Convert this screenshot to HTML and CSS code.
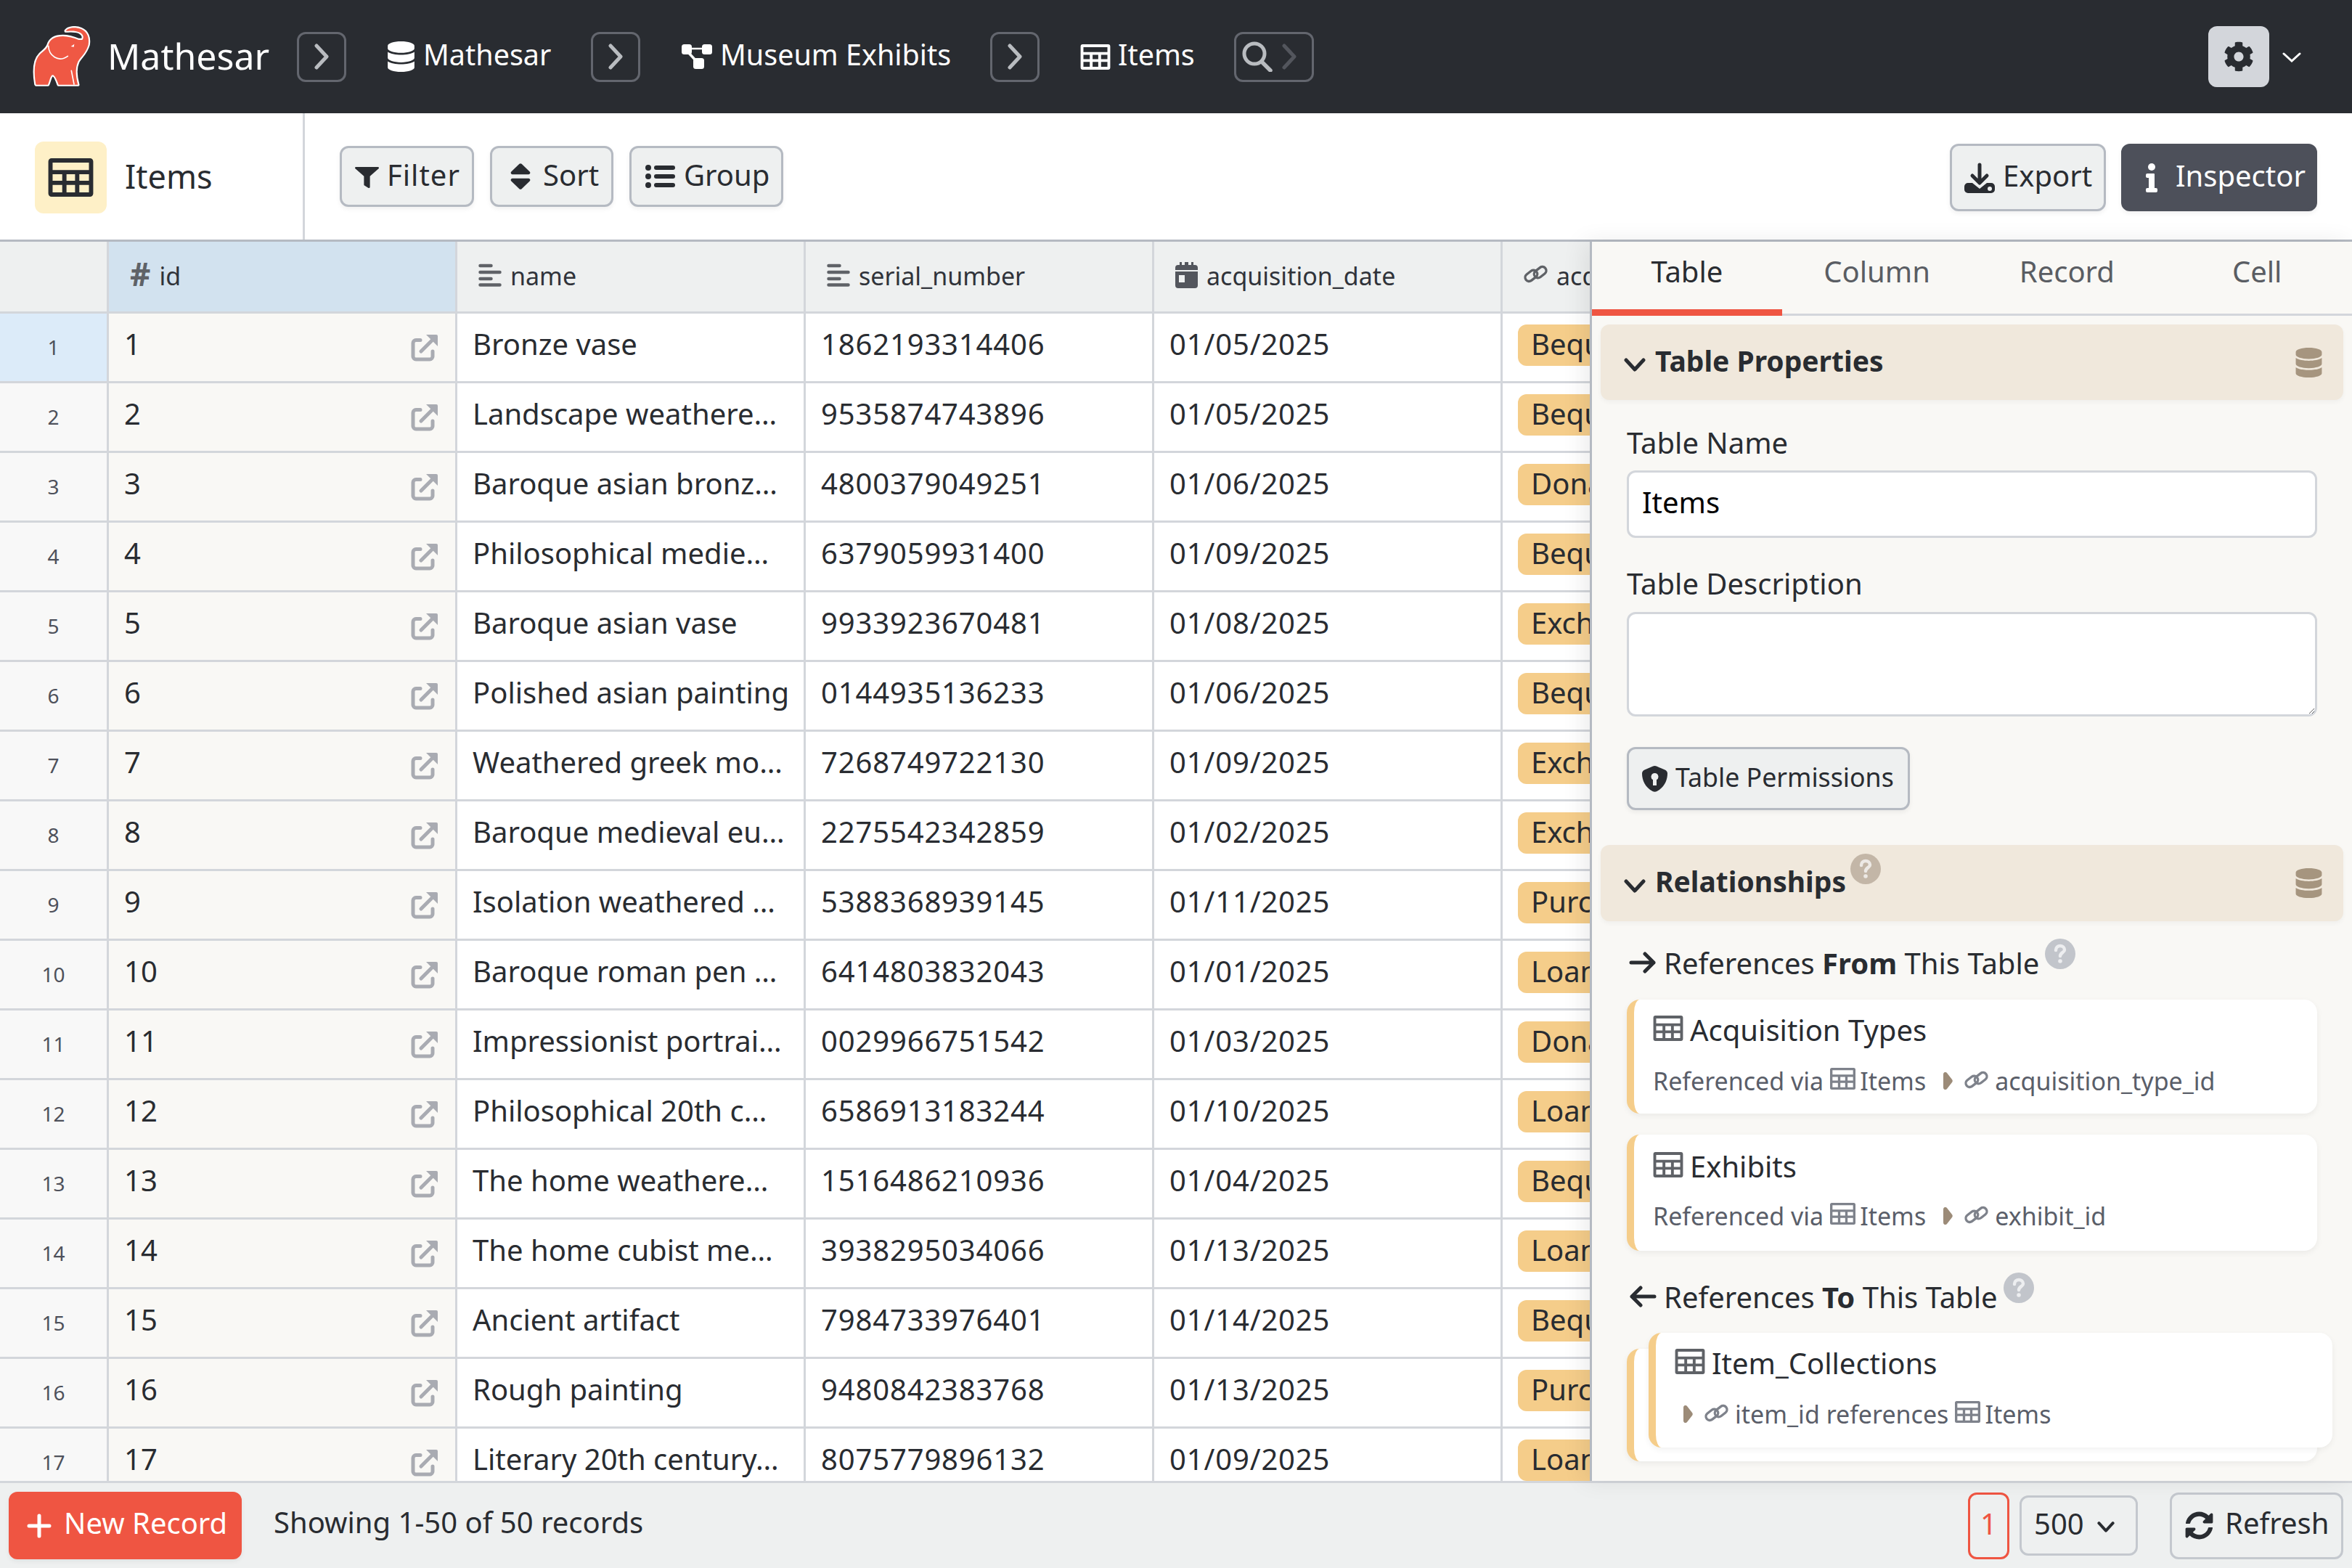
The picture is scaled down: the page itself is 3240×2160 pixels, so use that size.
FILE: index.html
```html
<!DOCTYPE html>
<html lang="en">
<head>
<meta charset="utf-8">
<title>Items | Mathesar</title>
<link rel="stylesheet" href="styles.css">
</head>
<body>
<svg class="defs" aria-hidden="true">
  <symbol id="tbl" viewBox="0 0 42 36"><path fill="currentColor" fill-rule="evenodd" d="M3 0h36a3 3 0 0 1 3 3v30a3 3 0 0 1-3 3H3a3 3 0 0 1-3-3V3a3 3 0 0 1 3-3zM4 4v7h34V4zM4 15v6h9v-6zm13 0v6h8v-6zm12 0v6h9v-6zM4 25v7h9v-7zm13 0v7h8v-7zm12 0v7h9v-7z"/></symbol>
  <symbol id="db" viewBox="0 0 448 512"><path fill="currentColor" d="M448 73.143v45.714C448 159.143 347.667 192 224 192S0 159.143 0 118.857V73.143C0 32.857 100.333 0 224 0s224 32.857 224 73.143zM448 176v102.857C448 319.143 347.667 352 224 352S0 319.143 0 278.857V176c48.125 33.143 136.208 48.572 224 48.572S399.874 209.143 448 176zm0 160v102.857C448 479.143 347.667 512 224 512S0 479.143 0 438.857V336c48.125 33.143 136.208 48.572 224 48.572S399.874 369.143 448 336z"/></symbol>
  <symbol id="chev" viewBox="0 0 20 36"><path fill="none" stroke="currentColor" stroke-width="5" stroke-linecap="round" stroke-linejoin="round" d="M3 3l14 15L3 33"/></symbol>
  <symbol id="down" viewBox="0 0 30 20"><path fill="none" stroke="currentColor" stroke-width="5" stroke-linecap="round" stroke-linejoin="round" d="M3 4l12 13L27 4"/></symbol>
  <symbol id="ext" viewBox="0 0 37 37"><path fill="none" stroke="currentColor" stroke-width="5" stroke-linecap="round" d="M13 7.500H7a4 4 0 0 0-4 4V30a4 4 0 0 0 4 4h19a4 4 0 0 0 4-4v-7M14 23L30 7"/><path fill="currentColor" d="M21 0h14a2 2 0 0 1 2 2v14z"/></symbol>
  <symbol id="text" viewBox="0 0 32 32"><g fill="none" stroke="currentColor" stroke-width="4.500" stroke-linecap="round"><path d="M2.500 3h15M2.500 12h27M2.500 21h15M2.500 29.500h27"/></g></symbol>
  <symbol id="link" viewBox="0 0 34 28"><g fill="none" stroke="currentColor" stroke-width="3.500" transform="rotate(-38 17 14)"><rect x="1" y="6.500" width="19" height="11" rx="5.500"/><rect x="14" y="10.500" width="19" height="11" rx="5.500"/></g></symbol>
  <symbol id="help" viewBox="0 0 42 42"><circle cx="21" cy="21" r="21" fill="currentColor"/><path fill="none" stroke="#fff" stroke-opacity=".7" stroke-width="4.500" stroke-linecap="round" d="M15 16c0-4 3-6 6-6s6 2 6 5.500-6 4-6 8.500"/><circle cx="21" cy="31" r="2.800" fill="#fff" fill-opacity=".7"/></symbol>
  <symbol id="tri" viewBox="0 0 13 24"><path fill="currentColor" d="M0 3c0-3 3-4 5-2l7 9c1 1 1 3 0 4l-7 9c-2 2-5 1-5-2z"/></symbol>
</svg>

<header class="topbar">
  <svg class="logo" viewBox="36 48 249 252"><path fill="#ef5844" stroke="#fff" stroke-width="13" stroke-linejoin="round" paint-order="stroke" d="M58 288C50 240 50 190 75 165 90 150 105 142 110 125 118 100 140 90 170 90 190 90 215 97 235 105L250 105C258 95 255 82 240 74 220 64 195 68 182 68 190 54 220 50 245 60 270 70 280 95 275 125 265 160 245 172 232 195 218 225 225 265 232 290L152 290C145 270 136 250 128 250 118 250 115 275 108 290L60 290Z"/><path fill="none" stroke="#fff" stroke-width="5" stroke-linecap="round" d="M110 130C112 170 150 200 190 172M205 232L216 288"/><path fill="#fff" d="M203 132l14-10-2 12z"/></svg>
  <span class="brand">Mathesar</span>
  <span class="crumb-btn first"><svg class="crumb-chev"><use href="#chev"/></svg></span>
  <svg class="ic-db"><use href="#db"/></svg>
  <span class="crumb">Mathesar</span>
  <span class="crumb-btn"><svg class="crumb-chev"><use href="#chev"/></svg></span>
  <svg class="ic-schema" viewBox="0 0 42 34"><g fill="#fff"><rect width="14" height="14" rx="3.500"/><rect x="28" width="14" height="14" rx="3.500"/><rect x="16" y="19" width="15" height="15" rx="3.500"/></g><path stroke="#fff" stroke-width="2.500" d="M10 6h22"/><path stroke="#fff" stroke-width="3.500" d="M8 10l13 14"/></svg>
  <span class="crumb exhibits">Museum Exhibits</span>
  <span class="crumb-btn"><svg class="crumb-chev"><use href="#chev"/></svg></span>
  <svg class="ic-crumb-table"><use href="#tbl"/></svg>
  <span class="crumb items">Items</span>
  <span class="crumb-btn search">
    <svg class="ic-search" viewBox="0 0 43 42"><circle cx="17" cy="17" r="14" fill="none" stroke="currentColor" stroke-width="5"/><path stroke="currentColor" stroke-width="5.500" stroke-linecap="round" d="M27 28l12 12"/></svg>
    <svg class="crumb-chev dim"><use href="#chev"/></svg>
  </span>
  <span class="gear"><svg class="ic-gear" viewBox="0 0 512 512"><path fill="currentColor" d="M487.400 315.700l-42.600-24.600c4.300-23.200 4.300-47 0-70.200l42.600-24.600c4.900-2.800 7.100-8.600 5.500-14-11.100-35.600-30-67.800-54.700-94.600-3.800-4.100-10-5.100-14.800-2.300L380.800 110c-17.900-15.400-38.500-27.300-60.800-35.100V25.800c0-5.600-3.900-10.500-9.400-11.700-36.700-8.200-74.300-7.800-109.200 0-5.500 1.200-9.400 6.100-9.400 11.700V75c-22.200 7.900-42.800 19.800-60.800 35.100L88.700 85.500c-4.900-2.800-11-1.900-14.800 2.300-24.700 26.700-43.600 58.900-54.700 94.600-1.700 5.400.6 11.200 5.500 14L67.300 221c-4.300 23.200-4.300 47 0 70.200l-42.600 24.600c-4.900 2.800-7.100 8.600-5.500 14 11.100 35.600 30 67.800 54.700 94.600 3.800 4.100 10 5.100 14.800 2.300l42.600-24.600c17.900 15.400 38.500 27.300 60.800 35.100v49.200c0 5.600 3.900 10.500 9.400 11.700 36.700 8.200 74.300 7.800 109.200 0 5.500-1.200 9.400-6.100 9.400-11.700v-49.200c22.200-7.900 42.800-19.800 60.800-35.100l42.600 24.600c4.900 2.800 11 1.900 14.800-2.300 24.700-26.700 43.600-58.900 54.700-94.600 1.500-5.500-.7-11.300-5.600-14.100zM256 336c-44.100 0-80-35.900-80-80s35.900-80 80-80 80 35.900 80 80-35.900 80-80 80z"/></svg></span>
  <svg class="ic-gear-down" viewBox="0 0 26 14"><path fill="none" stroke="#fff" stroke-width="3" stroke-linecap="round" d="M2 2l11 10L24 2"/></svg>
</header>

<section class="toolbar">
  <div class="title-panel">
    <span class="tile"><svg class="ic-tile"><use href="#tbl"/></svg></span>
    <span class="title">Items</span>
  </div>
  <div class="tools">
    <button class="btn filter"><svg class="ic-filter" viewBox="0 0 512 512" preserveAspectRatio="none"><path fill="currentColor" d="M487.976 0H24.028C2.710 0-8.047 25.866 7.058 40.971L192 225.941V432c0 7.831 3.821 15.170 10.237 19.662l80 55.980C298.020 518.690 320 507.493 320 487.980V225.941l184.947-184.970C520.021 25.896 509.338 0 487.976 0z"/></svg>Filter</button>
    <button class="btn sort"><svg class="ic-sort" viewBox="10 55 300 402" preserveAspectRatio="none"><path fill="currentColor" d="M41 288h238c21.400 0 32.100 25.900 17 41L177 448c-9.400 9.400-24.600 9.400-33.900 0L24 329c-15.100-15.100-4.400-41 17-41zm255-105L177 64c-9.400-9.400-24.600-9.400-33.900 0L24 183c-15.100 15.100-4.400 41 17 41h238c21.400 0 32.100-25.900 17-41z"/></svg>Sort</button>
    <button class="btn group"><svg class="ic-list" viewBox="0 0 41 34"><g fill="currentColor"><circle cx="4" cy="5" r="4"/><circle cx="4" cy="17" r="4"/><circle cx="4" cy="29" r="4"/><rect x="12" y="2" width="29" height="6" rx="3"/><rect x="12" y="14" width="29" height="6" rx="3"/><rect x="12" y="26" width="29" height="6" rx="3"/></g></svg>Group</button>
  </div>
  <div class="actions">
    <button class="btn export"><svg class="ic-export" viewBox="0 0 42 42"><path fill="none" stroke="currentColor" stroke-width="5" stroke-linecap="round" stroke-linejoin="round" d="M21 3v24M11 18l10 10 10-10"/><path fill="currentColor" fill-rule="evenodd" d="M5 28h6l10 8 10-8h6a5 5 0 0 1 5 5v4a5 5 0 0 1-5 5H5a5 5 0 0 1-5-5v-4a5 5 0 0 1 5-5zm30 5a3 3 0 1 0 0 6 3 3 0 0 0 0-6z"/></svg>Export</button>
    <button class="btn inspector-btn"><svg class="ic-info" viewBox="0 0 16 40"><circle cx="8" cy="5" r="5" fill="#fff"/><path fill="#fff" d="M2 14h9a1 1 0 0 1 1 1v19h2a2 2 0 0 1 2 2v2a2 2 0 0 1-2 2H2a2 2 0 0 1-2-2v-2a2 2 0 0 1 2-2h2V20H2a2 2 0 0 1-2-2v-2a2 2 0 0 1 2-2z"/></svg>Inspector</button>
  </div>
</section>

<main class="main">
  <section class="table">
    <div class="row head">
      <div class="hcell corner"></div>
      <div class="hcell selected"><span class="hash">#</span>id</div>
      <div class="hcell"><svg class="ic-text"><use href="#text"/></svg>name</div>
      <div class="hcell"><svg class="ic-text"><use href="#text"/></svg>serial_number</div>
      <div class="hcell"><svg class="ic-date" viewBox="0 0 31 36"><path fill="currentColor" fill-rule="evenodd" d="M6 0h3v4h4V0h5v4h4V0h3v4h2a4 4 0 0 1 4 4v3H0V8a4 4 0 0 1 4-4h2zM0 13h31v19a4 4 0 0 1-4 4H4a4 4 0 0 1-4-4zm5 5v10h8V18z"/></svg>acquisition_date</div>
      <div class="hcell"><svg class="ic-link"><use href="#link"/></svg>acquisition_type_id</div>
    </div>
    <div class="row"><div class="num current">1</div><div class="idc">1<svg class="ic-ext"><use href="#ext"/></svg></div><div class="cell">Bronze vase</div><div class="cell">1862193314406</div><div class="cell">01/05/2025</div><div class="cell"><span class="badge">Bequest</span></div></div>
    <div class="row"><div class="num">2</div><div class="idc">2<svg class="ic-ext"><use href="#ext"/></svg></div><div class="cell">Landscape weathere…</div><div class="cell">9535874743896</div><div class="cell">01/05/2025</div><div class="cell"><span class="badge">Bequest</span></div></div>
    <div class="row"><div class="num">3</div><div class="idc">3<svg class="ic-ext"><use href="#ext"/></svg></div><div class="cell">Baroque asian bronz…</div><div class="cell">4800379049251</div><div class="cell">01/06/2025</div><div class="cell"><span class="badge">Donation</span></div></div>
    <div class="row"><div class="num">4</div><div class="idc">4<svg class="ic-ext"><use href="#ext"/></svg></div><div class="cell">Philosophical medie…</div><div class="cell">6379059931400</div><div class="cell">01/09/2025</div><div class="cell"><span class="badge">Bequest</span></div></div>
    <div class="row"><div class="num">5</div><div class="idc">5<svg class="ic-ext"><use href="#ext"/></svg></div><div class="cell">Baroque asian vase</div><div class="cell">9933923670481</div><div class="cell">01/08/2025</div><div class="cell"><span class="badge">Exchange</span></div></div>
    <div class="row"><div class="num">6</div><div class="idc">6<svg class="ic-ext"><use href="#ext"/></svg></div><div class="cell">Polished asian painting</div><div class="cell">0144935136233</div><div class="cell">01/06/2025</div><div class="cell"><span class="badge">Bequest</span></div></div>
    <div class="row"><div class="num">7</div><div class="idc">7<svg class="ic-ext"><use href="#ext"/></svg></div><div class="cell">Weathered greek mo…</div><div class="cell">7268749722130</div><div class="cell">01/09/2025</div><div class="cell"><span class="badge">Exchange</span></div></div>
    <div class="row"><div class="num">8</div><div class="idc">8<svg class="ic-ext"><use href="#ext"/></svg></div><div class="cell">Baroque medieval eu…</div><div class="cell">2275542342859</div><div class="cell">01/02/2025</div><div class="cell"><span class="badge">Exchange</span></div></div>
    <div class="row"><div class="num">9</div><div class="idc">9<svg class="ic-ext"><use href="#ext"/></svg></div><div class="cell">Isolation weathered …</div><div class="cell">5388368939145</div><div class="cell">01/11/2025</div><div class="cell"><span class="badge">Purchase</span></div></div>
    <div class="row"><div class="num">10</div><div class="idc">10<svg class="ic-ext"><use href="#ext"/></svg></div><div class="cell">Baroque roman pen …</div><div class="cell">6414803832043</div><div class="cell">01/01/2025</div><div class="cell"><span class="badge">Loan</span></div></div>
    <div class="row"><div class="num">11</div><div class="idc">11<svg class="ic-ext"><use href="#ext"/></svg></div><div class="cell">Impressionist portrai…</div><div class="cell">0029966751542</div><div class="cell">01/03/2025</div><div class="cell"><span class="badge">Donation</span></div></div>
    <div class="row"><div class="num">12</div><div class="idc">12<svg class="ic-ext"><use href="#ext"/></svg></div><div class="cell">Philosophical 20th c…</div><div class="cell">6586913183244</div><div class="cell">01/10/2025</div><div class="cell"><span class="badge">Loan</span></div></div>
    <div class="row"><div class="num">13</div><div class="idc">13<svg class="ic-ext"><use href="#ext"/></svg></div><div class="cell">The home weathere…</div><div class="cell">1516486210936</div><div class="cell">01/04/2025</div><div class="cell"><span class="badge">Bequest</span></div></div>
    <div class="row"><div class="num">14</div><div class="idc">14<svg class="ic-ext"><use href="#ext"/></svg></div><div class="cell">The home cubist me…</div><div class="cell">3938295034066</div><div class="cell">01/13/2025</div><div class="cell"><span class="badge">Loan</span></div></div>
    <div class="row"><div class="num">15</div><div class="idc">15<svg class="ic-ext"><use href="#ext"/></svg></div><div class="cell">Ancient artifact</div><div class="cell">7984733976401</div><div class="cell">01/14/2025</div><div class="cell"><span class="badge">Bequest</span></div></div>
    <div class="row"><div class="num">16</div><div class="idc">16<svg class="ic-ext"><use href="#ext"/></svg></div><div class="cell">Rough painting</div><div class="cell">9480842383768</div><div class="cell">01/13/2025</div><div class="cell"><span class="badge">Purchase</span></div></div>
    <div class="row"><div class="num">17</div><div class="idc">17<svg class="ic-ext"><use href="#ext"/></svg></div><div class="cell">Literary 20th century…</div><div class="cell">8075779896132</div><div class="cell">01/09/2025</div><div class="cell"><span class="badge">Loan</span></div></div>
  </section>

  <aside class="inspector">
    <nav class="tabs">
      <span class="tab active">Table</span>
      <span class="tab">Column</span>
      <span class="tab">Record</span>
      <span class="tab">Cell</span>
    </nav>
    <div class="section-head">
      <svg class="ic-down"><use href="#down"/></svg>
      <span class="section-title">Table Properties</span>
      <svg class="ic-section-db"><use href="#db"/></svg>
    </div>
    <div class="section-body">
      <label class="label first-label">Table Name</label>
      <input class="input" value="Items">
      <label class="label">Table Description</label>
      <textarea class="textarea"></textarea>
      <button class="btn perms"><svg class="ic-shield" viewBox="0 0 35 36"><path fill="currentColor" fill-rule="evenodd" d="M17.500 0c1 0 2 .3 3 .8l11 4.700c2 .8 3.500 2.700 3.500 5 0 9-4 19-14.500 24.500-1.900 1-4 1-6 0C4 29.500 0 19.500 0 10.500c0-2.300 1.500-4.200 3.500-5l11-4.700c1-.5 2-.8 3-.8zm0 10a5 5 0 0 0-2.500 9.300V27h5v-7.700A5 5 0 0 0 17.500 10z"/></svg>Table Permissions</button>
    </div>
    <div class="section-head rel">
      <svg class="ic-down"><use href="#down"/></svg>
      <span class="section-title">Relationships</span>
      <svg class="ic-help tan"><use href="#help"/></svg>
      <svg class="ic-section-db"><use href="#db"/></svg>
    </div>
    <div class="section-body">
      <h3 class="ref-head from"><svg class="ic-arrow" viewBox="0 0 38 30"><path fill="none" stroke="currentColor" stroke-width="5" stroke-linecap="round" stroke-linejoin="round" d="M3 15h31M22 3l12 12-12 12"/></svg>References&nbsp;<b>From</b>&nbsp;This Table<svg class="ic-help"><use href="#help"/></svg></h3>
      <article class="card one">
        <div class="card-title"><svg class="ic-card"><use href="#tbl"/></svg>Acquisition Types</div>
        <div class="card-sub">Referenced via<svg class="ic-sub"><use href="#tbl"/></svg>Items<svg class="ic-tri"><use href="#tri"/></svg><svg class="ic-sublink"><use href="#link"/></svg>acquisition_type_id</div>
      </article>
      <article class="card two">
        <div class="card-title"><svg class="ic-card"><use href="#tbl"/></svg>Exhibits</div>
        <div class="card-sub">Referenced via<svg class="ic-sub"><use href="#tbl"/></svg>Items<svg class="ic-tri"><use href="#tri"/></svg><svg class="ic-sublink"><use href="#link"/></svg>exhibit_id</div>
      </article>
      <h3 class="ref-head to"><svg class="ic-arrow" viewBox="0 0 38 30"><path fill="none" stroke="currentColor" stroke-width="5" stroke-linecap="round" stroke-linejoin="round" d="M35 15H4M16 3L4 15l12 12"/></svg>References&nbsp;<b>To</b>&nbsp;This Table<svg class="ic-help"><use href="#help"/></svg></h3>
      <article class="card three">
        <div class="card-over">
          <div class="card-title"><svg class="ic-card"><use href="#tbl"/></svg>Item_Collections</div>
          <div class="card-sub indent"><svg class="ic-tri lead"><use href="#tri"/></svg><svg class="ic-sublink"><use href="#link"/></svg>item_id references<svg class="ic-sub"><use href="#tbl"/></svg>Items</div>
        </div>
      </article>
    </div>
  </aside>
</main>

<footer class="footer">
  <button class="btn new"><svg class="ic-plus" viewBox="0 0 34 34"><path stroke="#fff" stroke-width="5" stroke-linecap="round" d="M17 3v28M3 17h28"/></svg>New Record</button>
  <span class="count">Showing 1-50 of 50 records</span>
  <span class="page">1</span>
  <span class="size">500<svg class="ic-size"><use href="#down"/></svg></span>
  <button class="btn refresh"><svg class="ic-refresh" viewBox="0 0 512 512"><path fill="currentColor" d="M370.720 133.280C339.458 104.008 298.888 87.962 255.848 88c-77.458.068-144.328 53.178-162.791 126.850-1.344 5.363-6.122 9.150-11.651 9.150H24.103c-7.498 0-13.194-6.807-11.807-14.176C33.933 94.924 134.813 8 256 8c66.448 0 126.791 26.136 171.315 68.685L463.030 40.970C478.149 25.851 504 36.559 504 57.941V192c0 13.255-10.745 24-24 24H345.941c-21.382 0-32.090-25.851-16.971-40.971l41.750-41.749zM32 296h134.059c21.382 0 32.090 25.851 16.971 40.971l-41.750 41.750c31.262 29.273 71.835 45.319 114.876 45.280 77.418-.070 144.315-53.144 162.787-126.849 1.344-5.363 6.122-9.150 11.651-9.150h57.304c7.498 0 13.194 6.807 11.807 14.176C478.067 417.076 377.187 504 256 504c-66.448 0-126.791-26.136-171.315-68.685L48.970 471.030C33.851 486.149 8 475.441 8 454.059V320c0-13.255 10.745-24 24-24z"/></svg>Refresh</button>
</footer>
</body>
</html>
```
FILE: styles.css
```css
* { box-sizing: border-box; }
html, body { height: 100%; }
body {
  margin: 0;
  display: flex;
  flex-direction: column;
  height: 100vh;
  overflow: hidden;
  font-family: "Noto Sans", "Open Sans", sans-serif;
  font-size: 40px;
  color: #292c31;
  background: #fff;
}
.defs { position: absolute; width: 0; height: 0; }
svg { display: block; flex: none; }

/* top bar */
.topbar {
  flex: none;
  height: 156px;
  background: #292c31;
  color: #fff;
  display: flex;
  align-items: center;
  padding-left: 42px;
}
.logo { width: 83px; height: 84px; margin-right: 23px; }
.brand { font-size: 50px; width: 224px; white-space: nowrap; padding-bottom: 3px; }
.crumb { font-size: 39.500px; white-space: nowrap; padding-bottom: 6px; margin-left: 11px; width: 175px; }
.crumb.exhibits { width: 316px; }
.crumb.items { width: 104px; margin-left: 10px; }
.crumb-btn {
  width: 68px;
  height: 69px;
  border: 3px solid #63666e;
  border-radius: 12px;
  display: flex;
  align-items: center;
  justify-content: center;
  color: #b9bcc0;
  margin: 0 56px;
}
.crumb-btn.first { margin-left: 37px; }
.crumb-btn.search { width: 110px; margin-right: 0; gap: 12px; justify-content: flex-start; padding-left: 8px; }
.crumb-chev { width: 20px; height: 36px; }
.crumb-chev.dim { color: #53565d; }
.ic-db { width: 39px; height: 42px; color: #fff; }
.ic-schema { width: 42px; height: 34px; margin-left: 1px; }
.ic-crumb-table { width: 42px; height: 35px; color: #fff; }
.ic-search { width: 43px; height: 42px; }
.gear {
  margin-left: auto;
  width: 84px;
  height: 84px;
  background: #d3d6db;
  border-radius: 12px;
  color: #292c31;
  display: flex;
  align-items: center;
  justify-content: center;
}
.ic-gear { width: 42px; height: 42px; }
.ic-gear-down { width: 26px; height: 14px; margin: 2px 70px 0 18px; }

/* buttons */
.btn {
  font: inherit;
  color: #292c31;
  background: #eef0f0;
  border: 3px solid #b5bac2;
  border-radius: 12px;
  box-shadow: 0 3px 6px rgba(0, 0, 0, .06);
  display: flex;
  align-items: center;
  white-space: nowrap;
  padding: 0 0 6px;
}

/* toolbar */
.toolbar {
  flex: none;
  height: 177px;
  display: flex;
  align-items: center;
  border-bottom: 3px solid #b5bac2;
}
.title-panel {
  width: 420px;
  height: 100%;
  border-right: 3px solid #d3d6db;
  display: flex;
  align-items: center;
  padding-left: 48px;
  gap: 25px;
}
.tile {
  width: 99px;
  height: 99px;
  border-radius: 12px;
  background: #fef0c7;
  display: flex;
  align-items: center;
  justify-content: center;
  margin-top: 2px;
}
.ic-tile { width: 63px; height: 53px; }
.title { font-size: 45px; padding-bottom: 2px; }
.tools { display: flex; gap: 22px; padding-left: 48px; }
.tools .btn { height: 84px; }
.ic-filter { width: 33px; height: 29px; margin: 8px 11px 0 18px; }
.ic-sort { width: 28px; height: 36px; margin: 6px 17px 0 25px; }
.ic-list { width: 41px; height: 34px; margin: 6px 12px 0 19px; }
.filter { width: 185px; letter-spacing: 1px; }
.sort { width: 170px; }
.group { width: 212px; }
.actions { margin-left: auto; display: flex; gap: 21px; padding-right: 48px; margin-top: 3px; }
.actions .btn { height: 93px; }
.export { width: 215px; }
.ic-export { width: 42px; height: 42px; margin: 6px 11px 0 17px; }
.inspector-btn { width: 270px; background: #4d505a; border-color: #4d505a; color: #fff; }
.ic-info { width: 16px; height: 40px; margin: 6px 25px 0 31px; }

/* main */
.main { flex: 1; min-height: 0; display: flex; }
.table { flex: 1; min-width: 0; overflow: hidden; }
.row { display: grid; grid-template-columns: 150px repeat(5, 480px); height: 96px; }
.row.head { height: 99px; }
.hcell {
  background: #eef0f0;
  border-right: 3px solid #d3d6db;
  border-bottom: 3px solid #d3d6db;
  display: flex;
  align-items: center;
  padding: 0 0 2px 29px;
  font-size: 34px;
  white-space: nowrap;
  overflow: hidden;
  gap: 12px;
  color: #30333a;
}
.hcell.selected { background: #d2e2ef; }
.hash { font-size: 44px; font-weight: 700; color: #5f6267; margin-top: -6px; }
.ic-text { width: 32px; height: 32px; color: #5f6267; margin-top: -3px; }
.ic-date { width: 31px; height: 36px; color: #53565d; margin-top: -3px; }
.ic-link { width: 33px; height: 27px; color: #5f6267; margin-top: -6px; }
.num {
  background: #f8f8f8;
  border-right: 3px solid #d3d6db;
  border-bottom: 3px solid #d3d6db;
  display: flex;
  align-items: center;
  justify-content: center;
  font-size: 28px;
  color: #4e515b;
  padding-bottom: 2px;
}
.num.current { background: #dcebf9; }
.idc, .cell {
  border-right: 3px solid #d3d6db;
  border-bottom: 3px solid #d3d6db;
  display: flex;
  align-items: center;
  padding: 0 0 10px 21px;
  white-space: nowrap;
  overflow: hidden;
}
.cell:nth-child(4), .cell:nth-child(5) { letter-spacing: .85px; }
.idc { background: #f9f8f5; justify-content: space-between; padding-right: 24px; }
.ic-ext { width: 37px; height: 37px; color: #a9abb2; margin-top: 11px; }
.badge {
  background: #f5cd8a;
  border-radius: 12px;
  height: 57px;
  padding: 0 0 4px 18px;
  display: flex;
  align-items: center;
  margin-top: 4px;
  width: 300px;
}

/* inspector */
.inspector {
  flex: none;
  width: 1050px;
  border-left: 3px solid #b5bac2;
  background: #f9f8f5;
  position: relative;
  box-shadow: -8px 0 30px rgba(0, 0, 0, .08);
  overflow: hidden;
}
.tabs { display: flex; height: 102px; border-bottom: 3px solid #d3d6db; }
.tab {
  flex: 1;
  display: flex;
  align-items: center;
  justify-content: center;
  color: #5a5d63;
  height: 102px;
  padding-bottom: 21px;
}
.tab.active { color: #292c31; border-bottom: 9px solid #ef5542; padding-bottom: 12px; }
.section-head {
  margin: 12px 12px 0;
  height: 104px;
  background: #f0e8dc;
  border-radius: 12px;
  box-shadow: 0 3px 6px rgba(0, 0, 0, .04);
  display: flex;
  align-items: center;
  padding: 0 29px 0 32px;
}
.section-head.rel { margin-top: 48px; height: 105px; }
.ic-down { width: 30px; height: 20px; margin-top: 6px; }
.section-title { font-weight: 700; font-size: 39px; margin-left: 13px; padding-bottom: 6px; }
.ic-section-db { width: 37px; height: 41px; color: #a6957f; margin-left: auto; }
.ic-help { width: 42px; height: 42px; color: #c2c5cb; margin: -24px 0 0 8px; }
.ic-help.tan { color: #c3b6a7; margin: -40px 0 0 6px; }
.section-body { padding: 0 48px; }
.label { display: block; height: 50px; line-height: 50px; margin: 38px 0 14px; white-space: nowrap; }
.first-label { margin: 34px 0 13px; }
.input, .textarea {
  display: block;
  width: 100%;
  font: inherit;
  color: #000;
  background: #fff;
  border: 3px solid #d3d6db;
  border-radius: 12px;
  outline: 0;
  padding: 0 18px 6px;
}
.input { height: 93px; }
.textarea { height: 144px; }
.perms { width: 390px; height: 87px; margin-top: 42px; font-size: 35.700px; }
.ic-shield { width: 35px; height: 36px; margin: 6px 11px 0 18px; color: #292c31; }
.ref-head {
  display: flex;
  align-items: center;
  height: 50px;
  margin: 34px 0 24px;
  font-size: 40px;
  font-weight: 400;
  white-space: nowrap;
  padding-bottom: 4px;
}
.ref-head.to { margin: 40px 0 45px; }
.ic-arrow { width: 38px; height: 30px; margin-right: 10px; margin-left: 3px; }
.card {
  background: #fff;
  border-left: 10px solid #f5cd8a;
  border-radius: 18px;
  box-shadow: 0 3px 9px rgba(0, 0, 0, .06);
  padding: 16px 0 0 26px;
  position: relative;
}
.card.one { height: 157px; }
.card.two { height: 160px; margin-top: 29px; padding-top: 18px; }
.card.two .card-sub { margin-top: 21px; }
.card.three { height: 155px; }
.card-over {
  position: absolute;
  left: 20px;
  top: -22px;
  right: -21px;
  height: 158px;
  background: #fff;
  border-left: 10px solid #f5cd8a;
  border-radius: 18px;
  box-shadow: 0 3px 9px rgba(0, 0, 0, .06);
  padding: 16px 0 0 26px;
}
.card-title { display: flex; align-items: center; gap: 9px; height: 50px; white-space: nowrap; }
.ic-card { width: 42px; height: 35px; color: #5f6267; margin-top: -3px; }
.card-sub {
  display: flex;
  align-items: center;
  height: 46px;
  margin-top: 23px;
  font-size: 34px;
  color: #5a5e69;
  white-space: nowrap;
}
.ic-sub { width: 35px; height: 30px; color: #7e828b; margin: -6px 6px 0 9px; }
.ic-tri { width: 13px; height: 24px; color: #9c8b78; margin: 0 16px 0 24px; }
.ic-tri.lead { margin-left: 12px; }
.ic-sublink { width: 33px; height: 27px; color: #7e828b; margin: -3px 9px 0 0; }

/* footer */
.footer {
  flex: none;
  height: 120px;
  background: #eef0f0;
  border-top: 3px solid #d3d6db;
  display: flex;
  align-items: center;
  padding: 0 12px;
}
.new { width: 321px; height: 93px; background: #ef5542; border-color: #ef5542; color: #fff; padding-bottom: 8px; }
.ic-plus { width: 34px; height: 34px; margin: 8px 17px 0 22px; }
.count { margin-left: 44px; padding-bottom: 10px; white-space: nowrap; }
.page {
  margin-left: auto;
  width: 57px;
  height: 92px;
  border: 3px solid #ef5542;
  border-radius: 12px;
  color: #ef5542;
  display: flex;
  align-items: center;
  justify-content: center;
  padding-bottom: 6px;
}
.size {
  width: 163px;
  height: 83px;
  margin: 0 44px 0 14px;
  border: 3px solid #c4c8ce;
  border-radius: 12px;
  display: flex;
  align-items: center;
  padding: 0 0 6px 17px;
}
.ic-size { width: 24px; height: 16px; margin: 8px 0 0 18px; }
.refresh { width: 239px; height: 92px; background: transparent; border-color: #c4c8ce; box-shadow: none; padding-bottom: 8px; }
.ic-refresh { width: 39px; height: 39px; margin: 8px 16px 0 18px; }
```
